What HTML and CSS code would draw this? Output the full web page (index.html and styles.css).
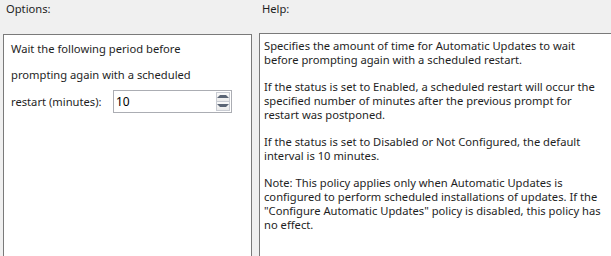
FILE: index.html
```html
<!DOCTYPE html>
<html lang="en">
<head>
    <meta charset="UTF-8">
    <title>Policy setting</title>
    <link rel="stylesheet" href="styles.css">
</head>
<body>
    <div class="columns">
        <div class="col col-options">
            <div class="label">Options:</div>
            <div class="panel options">
                <div class="opt-line">Wait the following period before</div>
                <div class="opt-line">prompting again with a scheduled</div>
                <div class="opt-row">
                    <span>restart (minutes):</span>
                    <div class="spin">
                        <input type="text" value="10">
                        <div class="spin-btns">
                            <div class="spin-btn"><span class="tri up"></span></div>
                            <div class="spin-btn"><span class="tri down"></span></div>
                        </div>
                    </div>
                </div>
            </div>
        </div>
        <div class="col col-help">
            <div class="label">Help:</div>
            <div class="panel help">
                <p>Specifies the amount of time for Automatic Updates to wait<br>before prompting again with a scheduled restart.</p>
                <p>If the status is set to Enabled, a scheduled restart will occur the<br>specified number of minutes after the previous prompt for<br>restart was postponed.</p>
                <p>If the status is set to Disabled or Not Configured, the default<br>interval is 10 minutes.</p>
                <p>Note: This policy applies only when Automatic Updates is<br>configured to perform scheduled installations of updates. If the<br>"Configure Automatic Updates" policy is disabled, this policy has<br>no effect.</p>
            </div>
        </div>
    </div>
</body>
</html>
```
FILE: styles.css
```css
body, html {
    margin: 0;
    padding: 0;
    background-color: #f0f0f0;
    font-family: "Noto Sans", sans-serif;
    font-size: 11.2px;
    color: #1e1e1e;
    overflow: hidden;
}
.columns {
    display: flex;
    gap: 7px;
    padding-left: 3px;
    width: 720px;
}
.col-options {
    width: 249px;
    flex: none;
}
.col-help {
    width: 380px;
    flex: none;
}
.label {
    height: 34px;
    line-height: 16px;
    padding-left: 3px;
    padding-top: 1px;
    box-sizing: border-box;
}
.col-help .label {
    height: 33px;
}
.panel {
    background-color: white;
    border: 1px solid #7a7a7a;
    height: 260px;
    box-sizing: border-box;
}
.options {
    padding: 6px 0 0 7px;
}
.opt-line {
    height: 26px;
    line-height: 16px;
}
.opt-row {
    display: flex;
    align-items: center;
    margin-top: -3px;
}
.opt-row span {
    width: 102px;
}
.spin {
    display: flex;
    width: 119px;
    height: 23px;
    border: 1px solid #abadb3;
    box-sizing: border-box;
    background: white;
}
.spin input {
    flex: 1;
    min-width: 0;
    border: none;
    outline: none;
    padding: 0 0 0 2px;
    font-family: inherit;
    font-size: 12px;
    color: #000;
    background: transparent;
}
.spin-btns {
    display: flex;
    flex-direction: column;
    justify-content: center;
    padding: 1px 1px 1px 0;
}
.spin-btn {
    width: 14px;
    height: 10px;
    border: 1px solid #c9ccd3;
    background: linear-gradient(#fafafa, #ebebeb);
    box-sizing: border-box;
    display: flex;
    align-items: center;
    justify-content: center;
}
.spin-btn + .spin-btn {
    border-top: none;
}
.tri {
    width: 0;
    height: 0;
    border-left: 3px solid transparent;
    border-right: 3px solid transparent;
}
.tri.up {
    border-bottom: 3px solid #5b6575;
}
.tri.down {
    border-top: 3px solid #5b6575;
}
.help {
    padding: 5px 0 0 4px;
    line-height: 14px;
}
.help p {
    margin: 0 0 13px 0;
    white-space: nowrap;
}
```
